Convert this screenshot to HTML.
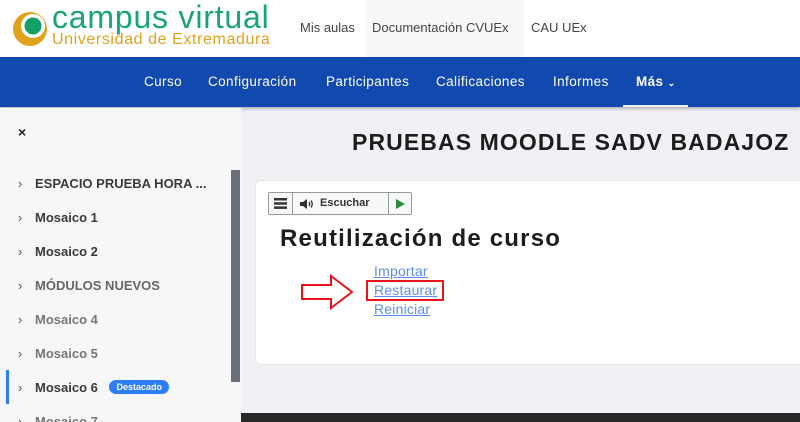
<!DOCTYPE html>
<html><head><meta charset="utf-8"><style>
*{margin:0;padding:0;box-sizing:border-box}
html,body{width:800px;height:422px;overflow:hidden}
body{font-family:"Liberation Sans",sans-serif;background:#f0f1f5;position:relative}
.hdr{position:absolute;left:0;top:0;width:800px;height:57px;background:#fff}
.doc{position:absolute;left:366px;top:0;width:158px;height:57px;background:#f8f8f8}
.hl{position:absolute;top:20px;font-size:13px;color:#444}
.nav{position:absolute;left:0;top:57px;width:800px;height:50px;background:#1249ae;box-shadow:0 2px 3px rgba(0,0,0,.25)}
.nv{position:absolute;top:17px;font-size:13.5px;color:#fff;letter-spacing:0.4px}
.side{position:absolute;left:0;top:108px;width:241px;height:314px;background:#f6f7f9;overflow:hidden}
.it{position:absolute;left:18px;font-size:13px;font-weight:bold;color:#3a3a3a}
.it span.c{display:inline-block;width:17px;color:#555;font-weight:normal}
.card{position:absolute;left:255px;top:180px;width:560px;height:185px;background:#fff;border-radius:6px;border:1px solid #e6e6e6}
a{color:#5b8dee;text-decoration:underline;font-size:14px;position:absolute;left:374px;letter-spacing:0.2px}
</style></head><body>
<div class="hdr"></div>
<div class="doc"></div>
<svg style="position:absolute;left:12px;top:9px" width="40" height="40" viewBox="0 0 40 40"><circle cx="18" cy="20" r="17" fill="#e0a21b"/><circle cx="21" cy="17" r="12" fill="#fff"/><circle cx="21" cy="17" r="8.5" fill="#13a067"/></svg>
<div style="position:absolute;left:52px;top:-1px;font-size:32px;color:#1aa37a;letter-spacing:0.8px">campus virtual</div>
<div style="position:absolute;left:52px;top:31px;font-size:16px;color:#e0a21b;letter-spacing:0.6px">Universidad de Extremadura</div>
<div class="hl" style="left:300px">Mis aulas</div>
<div class="hl" style="left:372px">Documentación CVUEx</div>
<div class="hl" style="left:531px">CAU UEx</div>
<div class="nav">
<div class="nv" style="left:144px">Curso</div>
<div class="nv" style="left:208px">Configuración</div>
<div class="nv" style="left:326px">Participantes</div>
<div class="nv" style="left:436px">Calificaciones</div>
<div class="nv" style="left:553px">Informes</div>
<div class="nv" style="left:636px;font-weight:bold">Más <span style="font-size:9px">⌄</span></div>
<div style="position:absolute;left:623px;top:48px;width:65px;height:2px;background:#eee"></div>
</div>
<div class="side">
<div style="position:absolute;left:18px;top:16px;font-size:14px;color:#222;font-weight:bold">×</div>
<div style="position:absolute;left:231px;top:62px;width:9px;height:212px;background:#6a7079"></div>
<div class="it" style="top:68px"><span class="c">›</span>ESPACIO PRUEBA HORA ...</div>
<div class="it" style="top:102px"><span class="c">›</span>Mosaico 1</div>
<div class="it" style="top:136px"><span class="c">›</span>Mosaico 2</div>
<div class="it" style="top:170px;color:#666"><span class="c">›</span>MÓDULOS NUEVOS</div>
<div class="it" style="top:204px;color:#777"><span class="c">›</span>Mosaico 4</div>
<div class="it" style="top:238px;color:#777"><span class="c">›</span>Mosaico 5</div>
<div style="position:absolute;left:6px;top:262px;width:3px;height:34px;background:#2b7ef5"></div>
<div class="it" style="top:272px"><span class="c">›</span>Mosaico 6 <span style="display:inline-block;background:#2b7ef5;color:#fff;font-size:9px;padding:2px 7px;border-radius:9px;margin-left:8px;vertical-align:2px">Destacado</span></div>
<div class="it" style="top:306px;color:#777"><span class="c">›</span>Mosaico 7</div>
</div>
<div style="position:absolute;left:352px;top:129px;font-size:23px;font-weight:bold;color:#1d1d1d;letter-spacing:1.1px">PRUEBAS MOODLE SADV BADAJOZ</div>
<div class="card"></div>
<div style="position:absolute;left:268px;top:192px;width:144px;height:23px;border:1px solid #999;border-radius:2px;background:#f7f8fa;display:flex">
<div style="width:24px;border-right:1px solid #999;display:flex;align-items:center;justify-content:center"><svg width="13" height="11"><rect y="0" width="13" height="2.5" fill="#333"/><rect y="4.2" width="13" height="2.5" fill="#333"/><rect y="8.4" width="13" height="2.5" fill="#333"/></svg></div>
<div style="width:96px;border-right:1px solid #999;font-size:11px;font-weight:bold;color:#333;line-height:21px;padding-left:6px;display:flex;align-items:center;gap:5px"><svg width="16" height="12" viewBox="0 0 16 12"><path d="M1 4H4L8 1V11L4 8H1Z" fill="#333"/><path d="M10 4Q11.5 6 10 8M12 2.5Q14.5 6 12 9.5" stroke="#333" stroke-width="1.3" fill="none"/></svg>Escuchar</div>
<div style="flex:1;display:flex;align-items:center;justify-content:center"><svg width="9" height="10"><path d="M0 0L9 5L0 10Z" fill="#2e8b3a"/></svg></div>
</div>
<div style="position:absolute;left:280px;top:225px;font-size:24px;font-weight:bold;color:#1d1d1d;letter-spacing:1.2px">Reutilización de curso</div>
<a style="top:263px">Importar</a>
<a style="top:282px">Restaurar</a>
<a style="top:301px">Reiniciar</a>
<div style="position:absolute;left:366px;top:280px;width:78px;height:21px;border:2px solid #e8141c"></div>
<svg style="position:absolute;left:300px;top:274px" width="56" height="36"><path d="M2 11H31V2L52 18L31 34V25H2Z" fill="#fff" stroke="#e8141c" stroke-width="2"/></svg>
<div style="position:absolute;left:241px;top:413px;width:559px;height:9px;background:#282828"></div>
</body></html>
